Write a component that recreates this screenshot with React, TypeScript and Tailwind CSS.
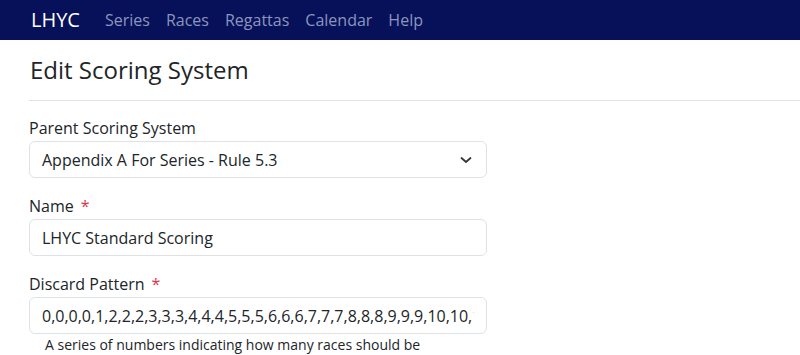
import React from 'react';

const navLinks = ['Series', 'Races', 'Regattas', 'Calendar', 'Help'];

function Label({ text, required = false }: { text: string; required?: boolean }) {
  return (
    <label className="block text-[16px] leading-6 mb-[1px]">
      {text}
      {required && <span className="text-[#dc3545] ml-[7px]">*</span>}
    </label>
  );
}

export default function App() {
  return (
    <div className="h-screen bg-white text-[#212529] font-['Open_Sans',sans-serif] overflow-hidden">
      {/* Navbar */}
      <nav className="h-10 bg-[#06115a] flex items-center pl-[31px]">
        <span className="text-white text-[20px] leading-none mr-[17px]">LHYC</span>
        <div className="flex items-center">
          {navLinks.map((link) => (
            <a key={link} className="px-2 text-[16px] text-[#8d95bd] leading-6">
              {link}
            </a>
          ))}
        </div>
      </nav>

      {/* Header */}
      <div className="pl-[29px]">
        <h1 className="text-[24px] leading-[29px] font-normal pt-[15px] pb-[16px] pl-px">
          Edit Scoring System
        </h1>
        <hr className="border-0 border-t border-[#e3e3e3]" />
      </div>

      {/* Form */}
      <div className="pl-[29px] pt-[15px] w-[487px]">
        <div className="mb-4">
          <Label text="Parent Scoring System" />
          <div className="h-[37px] border border-[#dee2e6] rounded-[6px] flex items-center justify-between pl-[12px] pr-[14px]">
            <span className="text-[16px]">Appendix A For Series - Rule 5.3</span>
            <svg width="12" height="8" viewBox="0 0 12 8" fill="none">
              <path d="M1.5 2l4.5 4 4.5-4" stroke="#343a40" strokeWidth="1.8" strokeLinecap="round" strokeLinejoin="round" />
            </svg>
          </div>
        </div>

        <div className="mb-4">
          <Label text="Name" required />
          <div className="h-[37px] border border-[#dee2e6] rounded-[6px] flex items-center pl-[12px]">
            <span className="text-[16px]">LHYC Standard Scoring</span>
          </div>
        </div>

        <div>
          <Label text="Discard Pattern" required />
          <div className="h-[37px] border border-[#dee2e6] rounded-[6px] flex items-center px-[12px]">
            <div className="flex-1 overflow-hidden whitespace-nowrap text-[16px]">
              0,0,0,0,1,2,2,2,3,3,3,4,4,4,5,5,5,6,6,6,7,7,7,8,8,8,9,9,9,10,10,10,11,11
            </div>
          </div>
          <p className="pl-4 text-[14px] leading-5 mt-[1px] whitespace-nowrap">
            A series of numbers indicating how many races should be
          </p>
        </div>
      </div>
    </div>
  );
}
